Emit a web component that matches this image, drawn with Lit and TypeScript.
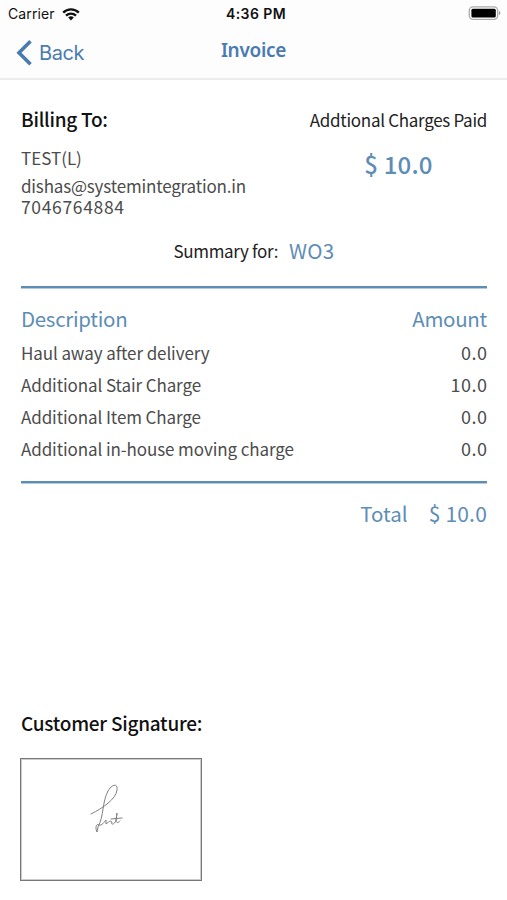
import { LitElement, html, css } from "lit";
import { customElement } from "lit/decorators.js";

const CHARGES = [
  { name: "Haul away after delivery", amount: "0.0" },
  { name: "Additional Stair Charge", amount: "10.0" },
  { name: "Additional Item Charge", amount: "0.0" },
  { name: "Additional in-house moving charge", amount: "0.0" },
];

@customElement("app-root")
export class AppRoot extends LitElement {
  static styles = css`
    :host {
      display: block;
      width: 507px;
      height: 900px;
      overflow: hidden;
      background: #fff;
      color: #4c4c4c;
      font-family: "Noto Sans CJK KR", "Noto Sans", sans-serif;
      font-size: 17px;
      white-space: nowrap;
    }
    * { box-sizing: border-box; }
    svg { display: block; }

    .header {
      height: 80px;
      background: #fdfdfd;
      border-bottom: 2px solid #ececec;
      font-family: Inter, sans-serif;
    }
    .status {
      height: 28px;
      display: grid;
      grid-template-columns: 1fr auto 1fr;
      align-items: center;
      padding: 0 6px 0 8px;
      color: #111;
      font-size: 14px;
      line-height: 28px;
    }
    .carrier { display: flex; align-items: center; gap: 7px; letter-spacing: 0.1px; }
    .time { font-weight: 600; letter-spacing: 0.4px; margin-left: 3px; }
    .battery { justify-self: end; margin-bottom: 2px; }
    .nav {
      height: 50px;
      display: grid;
      grid-template-columns: 1fr auto 1fr;
      padding: 0 16px;
      color: #4a7bb0;
    }
    .back {
      display: flex;
      align-items: center;
      gap: 6px;
      font-size: 20px;
      letter-spacing: -0.4px;
      line-height: 49px;
    }
    .title {
      font-family: "Noto Sans", sans-serif;
      font-weight: 600;
      font-size: 19px;
      letter-spacing: -0.3px;
      line-height: 45px;
    }

    .body { padding: 0 20px 0 21px; }
    .top { display: flex; justify-content: space-between; height: 150px; padding-top: 22px; }
    .heading { font-size: 19px; font-weight: 500; color: #111; line-height: 34px; letter-spacing: -0.25px; }
    .name { line-height: 26px; margin-top: 9px; }
    .email { line-height: 22px; margin-top: 4px; letter-spacing: -0.18px; }
    .phone { font-size: 17.5px; line-height: 20px; letter-spacing: 0.65px; }
    .paid { text-align: right; color: #222; line-height: 35px; letter-spacing: -0.3px; }
    .paid-amount {
      font-size: 24px;
      font-weight: 500;
      color: #5d8db5;
      line-height: 40px;
      text-align: center;
      letter-spacing: 0.2px;
      margin-top: 7px;
    }
    .summary {
      height: 56px;
      display: flex;
      justify-content: center;
      gap: 11px;
      line-height: 42px;
      color: #222;
      letter-spacing: -0.35px;
    }
    .order { font-size: 20.5px; color: #5d8db5; letter-spacing: 0.3px; line-height: 41px; }
    .rule { height: 2px; background: #5d8db5; box-shadow: 0 1px 0 #b4cbdd; }
    .row { display: flex; justify-content: space-between; line-height: 32px; height: 32px; letter-spacing: -0.1px; }
    .amount { font-size: 18px; letter-spacing: 0.5px; line-height: 30px; margin-right: -0.5px; }
    .head { font-size: 20.5px; color: #5d8db5; height: 37px; line-height: 36px; letter-spacing: -0.3px; }
    .charges { height: 193px; padding-top: 12px; }
    .total {
      display: flex;
      justify-content: flex-end;
      gap: 21px;
      font-size: 20.5px;
      color: #5d8db5;
      line-height: 34px;
      margin: 13px 0 176px;
    }
    .total-amount { font-size: 21px; letter-spacing: 0.2px; }
    .box {
      width: 182px;
      height: 123px;
      border: 1px solid #777;
      box-shadow: inset 0 0 0 1px #ccc;
      margin: 18px 0 0 -1px;
      padding: 24px 0 0 69px;
    }
  `;

  render() {
    return html`
      <div class="header">
        <div class="status">
          <div class="carrier">
            <span>Carrier</span>
            <svg width="18" height="13" viewBox="0 0 18 13" fill="none" stroke="#111" stroke-width="2.3">
              <path d="M1.2 4.6a11 11 0 0 1 15.6 0M4 7.6a7.2 7.2 0 0 1 10 0" />
              <path d="M6.2 9.5a4 4 0 0 1 5.6 0L9 12.4z" fill="#111" stroke="none" />
            </svg>
          </div>
          <span class="time">4:36 PM</span>
          <svg class="battery" width="33" height="16" viewBox="0 0 33 16">
            <rect x="1.3" y="1.8" width="28.4" height="12.6" rx="3.8" fill="#fff" stroke="#aaa" stroke-width="1.3" />
            <rect x="3.4" y="3.8" width="24.4" height="8.8" rx="1.5" fill="#000" />
            <path d="M31 6v4q1.4-.5 1.4-2T31 6z" fill="#999" />
          </svg>
        </div>
        <div class="nav">
          <div class="back">
            <svg width="17" height="28" viewBox="0 0 17 28" fill="none" stroke="#4a7bb0" stroke-width="3.6">
              <path d="M14.5 2.3L3 13.8l11.5 11.5" />
            </svg>
            <span>Back</span>
          </div>
          <div class="title">Invoice</div>
          <span></span>
        </div>
      </div>
      <div class="body">
        <div class="top">
          <div>
            <div class="heading">Billing To:</div>
            <div class="name">TEST(L)</div>
            <div class="email">dishas@systemintegration.in</div>
            <div class="phone">7046764884</div>
          </div>
          <div class="paid">
            <div>Addtional Charges Paid</div>
            <div class="paid-amount">$ 10.0</div>
          </div>
        </div>
        <div class="summary"><span>Summary for:</span><span class="order">WO3</span></div>
        <div class="rule"></div>
        <div class="charges">
          <div class="row head"><span>Description</span><span>Amount</span></div>
          ${CHARGES.map(
            (c) => html`<div class="row"><span>${c.name}</span><span class="amount">${c.amount}</span></div>`
          )}
        </div>
        <div class="rule"></div>
        <div class="total"><span>Total</span><span class="total-amount">$ 10.0</span></div>
        <div class="heading">Customer Signature:</div>
        <div class="box">
          <svg width="36" height="54" viewBox="0 0 36 54" fill="none" stroke="#808080" stroke-width="1" stroke-linecap="round">
            <path d="M1 31C13 25 26 16 27 7C28 0 22 1 18 8C12 19 14 33 8 44L7 49C5 45 6 40 9 42C12 43 14 39 16 37V41C19 39 20 37 22 39C20 42 25 42 26 37L27 30L26 38C27 41 29 39 30 38M21 36L32 35" />
          </svg>
        </div>
      </div>
    `;
  }
}
